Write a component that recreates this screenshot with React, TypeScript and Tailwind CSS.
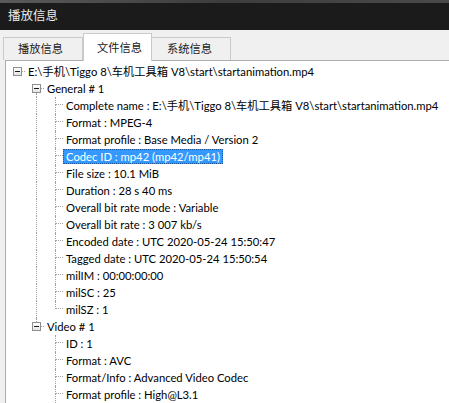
import React from "react";

type Guide = "blank" | "line" | "tee" | "elbow";
type BoxSpec = { up: boolean; down: boolean };

const DOT = "border-dotted border-[#a0a0a0]";

function GuideCell({ kind }: { kind: Guide }) {
  if (kind === "blank") return <div className="w-[19px] h-full shrink-0" />;
  if (kind === "line")
    return (
      <div className="w-[19px] h-full shrink-0 flex">
        <div className="w-[9px]" />
        <div className={`h-full border-l ${DOT}`} />
      </div>
    );
  return (
    <div className="w-[17px] h-full shrink-0 grid grid-cols-[9px_8px] grid-rows-[8px_9px]">
      <div />
      <div className={`border-l border-b ${DOT}`} />
      <div />
      <div className={kind === "tee" ? `border-l ${DOT}` : ""} />
    </div>
  );
}

function BoxCell({ up, down }: BoxSpec) {
  return (
    <div className="w-[17px] h-full shrink-0 flex flex-col">
      <div className={`h-[4px] ml-[9px] ${up ? `border-l ${DOT}` : ""}`} />
      <div className="h-[9px] flex items-center">
        <div className="ml-[5px] w-[9px] h-[9px] border border-[#8f8f8f] bg-gradient-to-b from-white to-[#e4e4e4] flex items-center justify-center">
          <div className="w-[5px] h-px bg-[#1a1a1a]" />
        </div>
        <div className={`w-[3px] self-center h-px border-t ${DOT}`} />
      </div>
      <div className={`flex-1 ml-[9px] ${down ? `border-l ${DOT}` : ""}`} />
    </div>
  );
}

type Row = {
  guides: Guide[];
  box?: BoxSpec;
  text: string;
  selected?: boolean;
};

const ROOT_PATH = "E:\\手机\\Tiggo 8\\车机工具箱 V8\\start\\startanimation.mp4";

const generalKids = [
  "Complete name : " + ROOT_PATH,
  "Format : MPEG-4",
  "Format profile : Base Media / Version 2",
  "Codec ID : mp42 (mp42/mp41)",
  "File size : 10.1 MiB",
  "Duration : 28 s 40 ms",
  "Overall bit rate mode : Variable",
  "Overall bit rate : 3 007 kb/s",
  "Encoded date : UTC 2020-05-24 15:50:47",
  "Tagged date : UTC 2020-05-24 15:50:54",
  "milIM : 00:00:00:00",
  "milSC : 25",
  "milSZ : 1",
];

const videoKids = [
  "ID : 1",
  "Format : AVC",
  "Format/Info : Advanced Video Codec",
  "Format profile : High@L3.1",
];

const rows: Row[] = [
  { guides: [], box: { up: false, down: false }, text: ROOT_PATH },
  { guides: ["blank"], box: { up: false, down: true }, text: "General # 1" },
  ...generalKids.map((t, i) => ({
    guides: ["blank", "line", i === generalKids.length - 1 ? "elbow" : "tee"] as Guide[],
    text: t,
    selected: t.startsWith("Codec ID"),
  })),
  { guides: ["blank"], box: { up: true, down: false }, text: "Video # 1" },
  ...videoKids.map((t) => ({
    guides: ["blank", "blank", "tee"] as Guide[],
    text: t,
  })),
];

function TreeRow({ row }: { row: Row }) {
  return (
    <div className="flex h-[17px] items-stretch">
      {row.guides.map((g, i) => (
        <GuideCell key={i} kind={g} />
      ))}
      {row.box && <BoxCell {...row.box} />}
      <div className="flex items-center">
        <span
          className={`h-[15px] px-[2px] border whitespace-nowrap flex items-center leading-none ${
            row.selected
              ? "bg-[#3399ff] text-white border-dotted border-[#1c5a9e]"
              : "border-transparent text-black"
          }`}
        >
          {row.text}
        </span>
      </div>
    </div>
  );
}

export default function App() {
  return (
    <div
      className="w-[449px] h-[403px] overflow-hidden flex flex-col bg-[#f0f0f0]"
      style={{ fontFamily: 'Lato, "Noto Sans CJK SC", sans-serif' }}
    >
      {/* title bar */}
      <div className="h-[3px] bg-gradient-to-r from-[#5a5a5a] via-[#3d3d3d] to-[#4a4a4a] shrink-0" />
      <div className="h-[27px] bg-[#1b1b1b] flex items-center pl-[8px] shrink-0">
        <span
          className="text-[12.5px] text-[#ececec] leading-none -mt-[2px]"
          style={{ fontFamily: '"Noto Sans CJK SC", sans-serif' }}
        >
          播放信息
        </span>
      </div>

      {/* tabs */}
      <div
        className="h-[30px] flex items-end pl-[3px] shrink-0 relative z-10"
        style={{ fontFamily: '"Noto Sans CJK SC", sans-serif' }}
      >
        <div className="w-[80px] h-[23px] border border-b-0 border-[#c9c9c9] bg-[#f0f0f0] flex items-center pl-[14px] text-[11.25px] text-[#1a1a1a] leading-none">
          播放信息
        </div>
        <div className="w-[69px] h-[28px] -mb-[1px] border border-b-0 border-[#c9c9c9] bg-white flex items-center pl-[13px] pt-[1px] text-[11.25px] text-[#1a1a1a] leading-none">
          文件信息
        </div>
        <div className="w-[79px] h-[23px] border border-b-0 border-l-0 border-[#c9c9c9] bg-[#f0f0f0] flex items-center pl-[15px] text-[11.25px] text-[#1a1a1a] leading-none">
          系统信息
        </div>
      </div>

      {/* panel */}
      <div className="flex-1 ml-[5px] border-l border-t border-[#adadad] bg-white pt-[2px] pl-[2px] text-[11.25px] overflow-hidden">
        {rows.map((r, i) => (
          <TreeRow key={i} row={r} />
        ))}
      </div>
    </div>
  );
}
